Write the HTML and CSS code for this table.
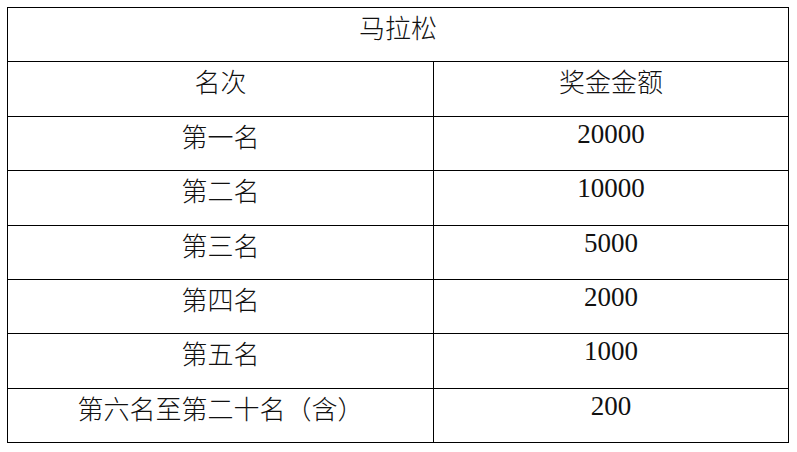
FILE: index.html
```html
<!DOCTYPE html>
<html lang="zh">
<head>
<meta charset="utf-8">
<title>马拉松</title>
<link rel="stylesheet" href="styles.css">
</head>
<body>
<div class="sheet">
  <div class="cell title">马拉松</div>
  <div class="cell">名次</div>
  <div class="cell">奖金金额</div>
  <div class="cell">第一名</div>
  <div class="cell num">20000</div>
  <div class="cell">第二名</div>
  <div class="cell num">10000</div>
  <div class="cell">第三名</div>
  <div class="cell num">5000</div>
  <div class="cell">第四名</div>
  <div class="cell num">2000</div>
  <div class="cell">第五名</div>
  <div class="cell num">1000</div>
  <div class="cell">第六名至第二十名（含）</div>
  <div class="cell num">200</div>
</div>
</body>
</html>
```

FILE: styles.css
```css
html, body {
  margin: 0;
  padding: 0;
  background: #fff;
}

body {
  padding: 7px 0 0 7px;
}

.sheet {
  display: grid;
  grid-template-columns: 425px 354px;
  grid-template-rows: 53px 54px 53px 54px 53px 53px 54px 53px;
  gap: 1px;
  padding: 1px;
  background: #000;
  width: max-content;
}

.cell {
  background: #fff;
  color: #111;
  font-family: "Noto Sans CJK SC", sans-serif;
  font-weight: 300;
  font-size: 26px;
  line-height: normal;
  text-align: center;
  overflow: hidden;
}

.title {
  grid-column: 1 / 3;
}

.num {
  font-family: "Liberation Serif", serif;
  font-weight: 400;
  font-size: 27px;
  padding-top: 2px;
}
```
